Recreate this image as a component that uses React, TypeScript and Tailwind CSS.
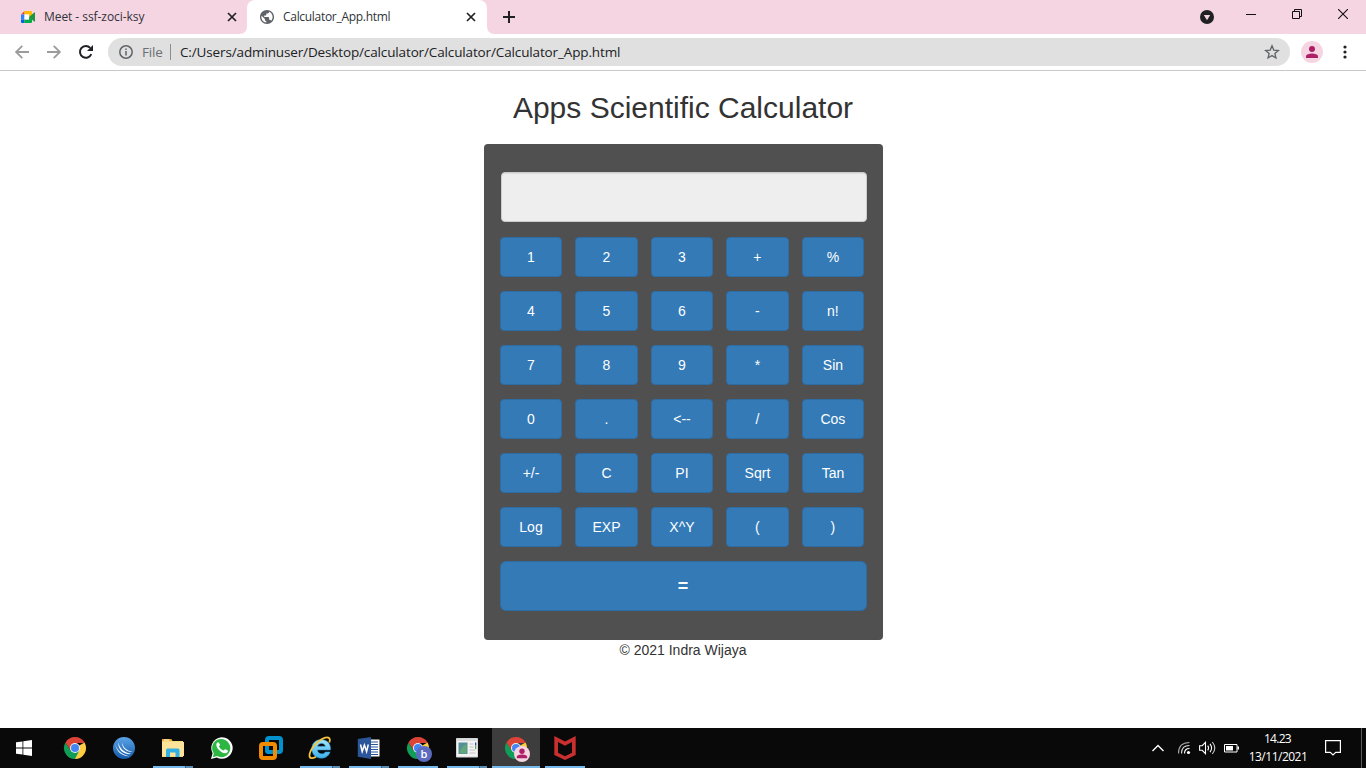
import type { ReactNode } from 'react';

const KEYS: string[] = [
  '1', '2', '3', '+', '%',
  '4', '5', '6', '-', 'n!',
  '7', '8', '9', '*', 'Sin',
  '0', '.', '<--', '/', 'Cos',
  '+/-', 'C', 'PI', 'Sqrt', 'Tan',
  'Log', 'EXP', 'X^Y', '(', ')',
];

function CloseX() {
  return (
    <svg width="10" height="10" viewBox="0 0 10 10" className="shrink-0">
      <path d="M1 1l8 8M9 1l-8 8" stroke="#1f2024" strokeWidth="1.7" fill="none" />
    </svg>
  );
}

function MeetIcon() {
  return (
    <svg width="16" height="16" viewBox="0 0 16 16" className="shrink-0">
      <path d="M1 5.5L4.5 2v3.5z" fill="#ea4335" />
      <path d="M4.5 2H11q1 0 1 1v3L9 8V5.500H4.500z" fill="#fbbc04" />
      <path d="M1 5.500h3.500v5H1z" fill="#2684fc" />
      <path d="M1 10.500h3.500V14H2q-1 0-1-1z" fill="#0066da" />
      <path d="M4.500 10.500H9V8l3 2v3q0 1-1 1H4.500z" fill="#00ac47" />
      <path d="M9 8l5.200-4.600q.8-.4.8.5v8.200q0 .9-.8.5z" fill="#1d9440" />
      <path d="M4.500 5.500H9v5H4.500z" fill="#fff" />
    </svg>
  );
}

function GlobeIcon() {
  return (
    <svg width="16" height="16" viewBox="0.600 0.600 22.800 22.800" className="shrink-0">
      <path fill="#5f6368" d="M12 2C6.480 2 2 6.480 2 12s4.480 10 10 10 10-4.480 10-10S17.520 2 12 2zm-1 17.930c-3.950-.49-7-3.850-7-7.930 0-.62.08-1.210.21-1.790L9 15v1c0 1.100.9 2 2 2v1.930zm6.900-2.540c-.26-.81-1-1.390-1.900-1.390h-1v-3c0-.55-.45-1-1-1H8v-2h2c.55 0 1-.45 1-1V7h2c1.100 0 2-.9 2-2v-.41c2.930 1.190 5 4.060 5 7.410 0 2.080-.8 3.970-2.100 5.390z" />
    </svg>
  );
}

function Toolbar() {
  return (
    <div className="flex h-[37px] items-center border-b border-[#c9c9c9] bg-white">
      <div className="flex w-[108px] shrink-0 items-center gap-4 pl-[14px]">
        <svg width="16" height="16" viewBox="0 0 16 16" className="shrink-0"><path d="M15 8H2.500M8.300 1.800L2.100 8l6.200 6.200" stroke="#9c9c9e" strokeWidth="1.800" fill="none" /></svg>
        <svg width="16" height="16" viewBox="0 0 16 16" className="shrink-0"><path d="M1 8h12.500M7.700 1.800L13.900 8l-6.200 6.200" stroke="#9c9c9e" strokeWidth="1.800" fill="none" /></svg>
        <svg width="16" height="16" viewBox="0 0 16 16" className="shrink-0"><path d="M13.300 10.200A5.900 5.900 0 1 1 12.200 3.900" stroke="#202124" strokeWidth="2" fill="none" /><path d="M15 1v6H9z" fill="#202124" /></svg>
      </div>
      <div className="flex h-7 w-[1182px] shrink-0 items-center rounded-full bg-[#e0e0e0] pl-[11px] pr-[10px]">
        <svg width="14" height="14" viewBox="0 0 14 14"><circle cx="7" cy="7" r="6.200" fill="none" stroke="#5f6368" strokeWidth="1.500" /><path d="M6.250 6h1.500v4.500h-1.500zM6.250 3.400h1.500v1.500h-1.500z" fill="#5f6368" /></svg>
        <span className="ml-[9px] w-[21px] whitespace-nowrap text-[13.500px] tracking-[-0.2px] text-[#6b6e72]">File</span>
        <div className="ml-[7px] h-4 w-px bg-[#8c8e91]" />
        <span className="ml-[9px] whitespace-nowrap text-[13.500px] tracking-[-0.135px] text-[#202124]">C:/Users/adminuser/Desktop/calculator/Calculator/Calculator_App.html</span>
        <svg width="16" height="16" viewBox="0 0 16 16" className="ml-auto"><path d="M8 1.800l1.750 4.300 4.650.4-3.550 3 1.100 4.500L8 11.600 4.050 14l1.100-4.500-3.550-3 4.650-.4z" fill="none" stroke="#5f6368" strokeWidth="1.300" /></svg>
      </div>
      <div className="ml-[11px] flex h-[22px] w-[22px] items-center justify-center rounded-full bg-[#f6d5e3]">
        <svg width="12" height="12" viewBox="1 1 12 12"><circle cx="7" cy="4" r="3" fill="#ad1f66" /><path d="M1 13v-1.600C1 9.400 4.500 8.500 7 8.500s6 .9 6 2.900V13z" fill="#ad1f66" /></svg>
      </div>
      <svg width="4" height="14" viewBox="0 0 4 14" className="ml-[20px]"><g fill="#202124"><circle cx="2" cy="2" r="1.600" /><circle cx="2" cy="7" r="1.600" /><circle cx="2" cy="12" r="1.600" /></g></svg>
    </div>
  );
}

function TabStrip() {
  return (
    <div className="flex h-[34px] items-center bg-[#f6d5e3] text-[12px] text-[#303338]">
      <div className="flex h-full w-[239px] shrink-0 items-center pl-5">
        <MeetIcon />
        <span className="ml-2 w-[183px] whitespace-nowrap tracking-[-0.06px]">Meet - ssf-zoci-ksy</span>
        <CloseX />
      </div>
      <svg width="8" height="34" viewBox="0 0 8 34" className="shrink-0"><path d="M0 34q8 0 8-8v8z" fill="#fff" /></svg>
      <div className="flex h-full w-[240px] shrink-0 items-center rounded-t-[8px] bg-white pl-3">
        <GlobeIcon />
        <span className="ml-2 w-[183px] whitespace-nowrap tracking-[-0.3px]">Calculator_App.html</span>
        <CloseX />
      </div>
      <svg width="8" height="34" viewBox="0 0 8 34" className="shrink-0"><path d="M8 34q-8 0-8-8v8z" fill="#fff" /></svg>
      <svg width="12" height="12" viewBox="0 0 12 12" className="ml-2"><path d="M6 0v12M0 6h12" stroke="#202124" strokeWidth="2" /></svg>
      <svg width="14" height="14" viewBox="0 0 14 14" className="ml-auto"><circle cx="7" cy="7" r="7" fill="#202124" /><path d="M3.800 5h6.400L7 10.200z" fill="#f6d5e3" /></svg>
      <svg width="10" height="10" viewBox="0 0 10 10" className="mb-[6px] ml-[32px]"><path d="M0 5.500h10" stroke="#111" /></svg>
      <svg width="10" height="10" viewBox="0 0 10 10" className="mb-[6px] ml-[36px]"><path d="M.5 2.500h7v7h-7zM2.500 2.500v-2h7v7h-2" fill="none" stroke="#111" /></svg>
      <svg width="10" height="10" viewBox="0 0 10 10" className="mb-[6px] ml-[36px] mr-[18px]"><path d="M0 0l10 10M10 0L0 10" stroke="#111" strokeWidth="1.100" /></svg>
    </div>
  );
}

function ChromeLogo() {
  return (
    <g>
      <path d="M12 12L21.530 6.500A11 11 0 0 1 12 23l-1-6z" fill="#ffcd40" />
      <path d="M12 12l4.330 2.500L12 23A11 11 0 0 1 2.470 6.500L7.670 14.500z" fill="#0f9d58" />
      <path d="M12 7h9.800a11 11 0 0 0-.27-.5A11 11 0 0 0 2.470 6.500L7.670 14.500z" fill="#db4437" />
      <circle cx="12" cy="12" r="5" fill="#f1f1f1" />
      <circle cx="12" cy="12" r="4" fill="#4285f4" />
    </g>
  );
}

type AppItem = { name: string; line: 'none' | 'full' | 'split' | 'active'; icon: ReactNode };

const APPS: AppItem[] = [
  { name: 'chrome', line: 'none', icon: <ChromeLogo /> },
  {
    name: 'globe', line: 'none', icon: (
      <g>
        <defs><linearGradient id="blueBall" x1="0" y1="0" x2="0" y2="1"><stop offset="0" stopColor="#5ba4e8" /><stop offset="1" stopColor="#1359a8" /></linearGradient></defs>
        <circle cx="12" cy="12" r="11" fill="url(#blueBall)" />
        <g fill="#fff">
          <path d="M3.300 7.800C4.500 14 9.500 18.600 17.600 20.200 10.500 20.600 4.300 16 3.300 7.800z" />
          <path d="M6.200 6.200C7.600 12.500 12 16.500 19.600 18 11.800 19 6 14 6.200 6.200z" />
          <path d="M10 6.500c1.200 5 4.800 8.300 11 9.300C14.700 16.200 9.800 12.500 10 6.500z" />
        </g>
      </g>
    ),
  },
  {
    name: 'explorer', line: 'split', icon: (
      <g>
        <path d="M1 3h9l1.500 2H22v16H1z" fill="#f9d978" />
        <path d="M1 3h9l1 1.700H1z" fill="#e9a72b" /><path d="M3 3.500h5v1H3z" fill="#fff" />
        <path d="M1 6h22v14H1z" fill="#fce59a" />
        <path d="M5 21v-7q0-1.500 1.500-1.500h10.500q1.500 0 1.500 1.500v7h-4v-4.500H9V21z" fill="#32afe3" />
      </g>
    ),
  },
  {
    name: 'whatsapp', line: 'none', icon: (
      <g>
        <path d="M1 23l1.600-5.800A10.700 10.700 0 1 1 6.800 21.400z" fill="#fff" />
        <path d="M2.800 21.200l1-3.800a9.100 9.100 0 1 1 3.100 2.700z" fill="#2cb742" />
        <path d="M8.300 6.200c-.8-.2-2.200 1.200-2 2.700.4 3.500 4.500 7.700 8.600 8.300 1.700.2 3.200-1.200 3-2.400-.1-.6-2.400-1.700-2.900-1.600-.6.1-1 1.400-1.600 1.300-1.800-.5-3.700-2.200-4.400-3.900-.2-.6 1.100-1.100 1-1.800-.1-.5-1.100-2.500-1.700-2.600z" fill="#fff" />
      </g>
    ),
  },
  {
    name: 'vmware', line: 'none', icon: (
      <g fill="none" strokeWidth="4">
        <rect x="8" y="2" width="14" height="14" rx="2" stroke="#0091cf" />
        <rect x="2" y="8" width="14" height="14" rx="2" stroke="#f38b00" />
        <path d="M8 10.500V14q0 2 2 2h3.500" stroke="#0091cf" />
      </g>
    ),
  },
  {
    name: 'ie', line: 'split', icon: (
      <g>
        <defs><linearGradient id="ieBlue" x1="0" y1="0" x2="0" y2="1"><stop offset="0" stopColor="#a5e6fb" /><stop offset="1" stopColor="#3bb0ea" /></linearGradient></defs>
        <path d="M22.600 14H9.500c.3 4.500 6.300 4.800 7.800 1.900h4.800C19.600 25 3.600 24.500 3.800 12.500 4 .5 23.500 0 22.600 14zM9.600 10.300h7.700c-.4-3.900-7.100-3.900-7.700 0z" fill="url(#ieBlue)" stroke="#2489c9" strokeWidth=".5" />
        <path d="M21.300 6.500C23.500 1 19 0 13.500 3.200 6.500 7.300 1.500 15 1.500 19.500c0 3.800 3.500 3 6.500 1.200" fill="none" stroke="#f3c43b" strokeWidth="1.800" />
      </g>
    ),
  },
  {
    name: 'word', line: 'split', icon: (
      <g>
        <path d="M13 3.500h9.500v17H13z" fill="#fff" />
        <path d="M14 6h7M14 8.500h7M14 11h7M14 13.500h7M14 16h7M14 18.500h7" stroke="#2b579a" strokeWidth="1.100" />
        <path d="M.8 3L14 1v22L.8 20.800z" fill="#2b579a" />
        <path d="M3.500 8.500l1.700 7 2.200-6.500 2.200 6.500 1.700-7" fill="none" stroke="#fff" strokeWidth="1.500" />
      </g>
    ),
  },
  {
    name: 'chrome-b', line: 'full', icon: (
      <g>
        <ChromeLogo />
        <circle cx="18" cy="18" r="8" fill="#5c6bc0" />
        <text x="18" y="22" textAnchor="middle" fontSize="11" fontWeight="600" fill="#fff">b</text>
      </g>
    ),
  },
  {
    name: 'window', line: 'split', icon: (
      <g>
        <path d="M1.500 2.500h21v18.500h-21z" fill="#f3f3f3" stroke="#d5d5d5" />
        <path d="M2 3h20v2H2z" fill="#d8dee2" />
        <path d="M3.500 6.500h9v11.500h-9z" fill="#578f96" /><path d="M4.500 17.500c1-5 4-8 7-9.500v9.500z" fill="#61a777" />
        <path d="M14.500 8h4M14.500 11h4M14.500 14h6M14.500 17h6" stroke="#d3d3d3" strokeWidth="1.500" />
        <path d="M20 6.500h1.300v3H20z" fill="#2b4da2" /><path d="M20 9.500h1.300v3.500H20z" fill="#57a86a" />
      </g>
    ),
  },
  {
    name: 'chrome-profile', line: 'active', icon: (
      <g>
        <ChromeLogo />
        <circle cx="18" cy="18" r="8" fill="#f6d5e3" />
        <circle cx="18" cy="15.300" r="2.700" fill="#ad1f66" /><path d="M12.800 22.300v-1.300c0-1.700 2.900-2.400 5.200-2.400s5.200.7 5.200 2.400v1.300z" fill="#ad1f66" />
      </g>
    ),
  },
  {
    name: 'mcafee', line: 'full', icon: (
      <path d="M1.300 0L12 5.400 22.700 0v19L12 24 1.300 19zM5 6v10.800l7 3.500 7-3.500V6l-7 3.700z" fill="#c8302f" />
    ),
  },
];

function TaskButton({ item }: { item: AppItem }) {
  const active = item.line === 'active';
  return (
    <div className={active ? 'flex h-10 w-12 flex-col items-center bg-[#3d3d3d]' : 'flex h-10 w-12 flex-col items-center'}>
      <svg width="24" height="24" viewBox="0 0 24 24" className="mt-2 shrink-0 overflow-visible">{item.icon}</svg>
      {item.line !== 'none' && (
        <div className={active ? 'mt-auto flex h-[2px] w-12 bg-[#76b9ed]' : 'mt-auto flex h-[2px] w-10 justify-end bg-[#76b9ed]'}>
          {item.line === 'split' && <div className="h-full w-2 border-l border-[#3a5f7c] bg-[#5b8cb2]" />}
        </div>
      )}
    </div>
  );
}

function Taskbar() {
  return (
    <div className="flex h-10 shrink-0 items-center bg-[#090909] text-white">
      <div className="flex w-[51px] shrink-0 pl-4">
        <svg width="16" height="16" viewBox="0 0 16 16"><path d="M0 2.300l6.500-.9v6.200H0zM7.300 1.300L16 0v7.600H7.300zM0 8.400h6.500v6.200L0 13.700zM7.300 8.400H16V16l-8.700-1.300z" fill="#fff" /></svg>
      </div>
      <div className="flex gap-px">{APPS.map((a) => <TaskButton key={a.name} item={a} />)}</div>
      <svg width="12" height="8" viewBox="0 0 12 8" className="ml-auto"><path d="M.5 7L6 1.500 11.500 7" fill="none" stroke="#fff" strokeWidth="1.400" /></svg>
      <svg width="14" height="14" viewBox="0 0 14 14" className="ml-[13px]"><g fill="none" stroke="#aaa" strokeWidth="1.100"><path d="M1.500 12.500Q1.500 1.500 12.500 1.500" /><path d="M4.500 12.500Q4.500 4.500 12.500 4.500" stroke="#ddd" /><path d="M7.500 12.500Q7.500 7.500 12.500 7.500" stroke="#fff" /></g><circle cx="11.500" cy="11.500" r="1.600" fill="#fff" /></svg>
      <svg width="17" height="14" viewBox="0 0 17 14" className="ml-[8px]"><g fill="none" stroke="#fff" strokeWidth="1.100"><path d="M.6 4.700h2.600L6.500 1.300v11.400L3.200 9.300H.6z" /><path d="M8.700 4.600q1.800 2.400 0 4.800M11 2.800q3.200 4.200 0 8.400" /><path d="M13.300 1q5 6 0 12" stroke="#ccc" /></g></svg>
      <svg width="15" height="10" viewBox="0 0 15 10" className="ml-[8px]"><path d="M.5 1.500h12.500v7.500H.5z" fill="none" stroke="#fff" /><path d="M2 3h7v4.600H2zM13.500 3.500H15v3h-1.500z" fill="#fff" /></svg>
      <div className="ml-[9px] flex w-[60px] flex-col items-center text-[12px] leading-[18px]">
        <span className="mr-px tracking-[-0.7px]">14.23</span>
        <span className="whitespace-nowrap tracking-[-0.5px]">13/11/2021</span>
      </div>
      <svg width="16" height="16" viewBox="0 0 16 16" className="ml-[17px]"><path d="M.6.600h14.800v11.800h-4.700L8 15l-2.700-2.600H.6z" fill="none" stroke="#fff" strokeWidth="1.200" /></svg>
      <div className="ml-5 mr-1 h-10 w-px bg-[#5a5a5a]" />
    </div>
  );
}

export default function App() {
  return (
    <div className="flex h-[768px] w-[1366px] flex-col overflow-hidden bg-white font-['Open_Sans','Noto_Sans',sans-serif]">
      <TabStrip />
      <Toolbar />
      <main className="flex flex-1 flex-col items-center font-['Liberation_Sans',Arial,sans-serif] text-[14px] text-[#333]">
        <h1 className="mt-5 text-[30px] leading-[33px]">Apps Scientific Calculator</h1>
        <div className="mt-5 h-[496px] w-[399px] rounded-[4px] bg-[#505050] pl-4 pr-4 pt-7">
          <div className="ml-px h-[50px] w-[366px] rounded-[4px] border border-[#ccc] bg-[#eee] shadow-[inset_0_1px_1px_rgba(0,0,0,0.075)]" />
          <div className="ml-[0.3px] mt-[15px] grid w-[365px] grid-cols-[repeat(5,62.400px)] gap-x-[13.100px] gap-y-[14px]">
            {KEYS.map((k) => (
              <button key={k} className="h-10 rounded-[4px] border border-[#2e6da4] bg-[#337ab7] text-center text-[14px] leading-5 text-white">{k}</button>
            ))}
          </div>
          <button className="mt-[14px] block h-[50px] w-[367px] rounded-[6px] border border-[#2e6da4] bg-[#337ab7] text-[18px] font-bold text-white">=</button>
        </div>
        <p className="leading-5">© 2021 Indra Wijaya</p>
      </main>
      <Taskbar />
    </div>
  );
}
